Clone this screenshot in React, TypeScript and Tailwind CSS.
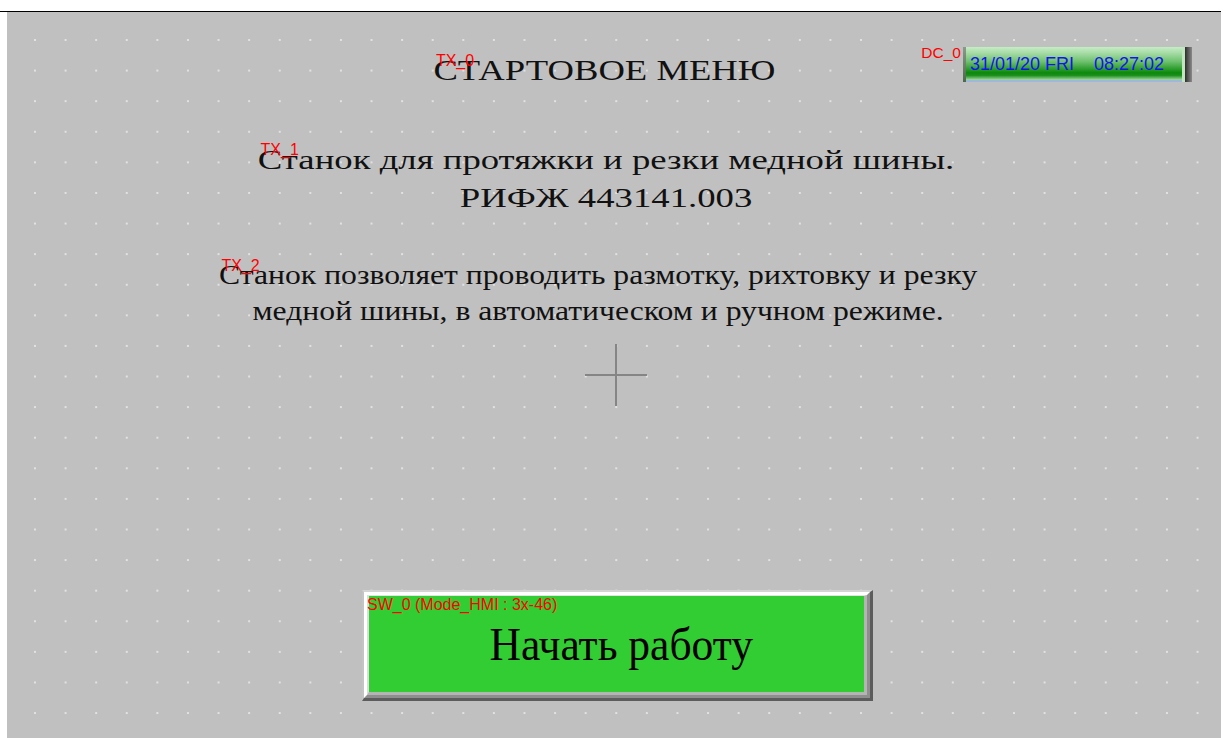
const serif = "font-['Liberation_Serif','Times_New_Roman',serif]";
const sans = "font-['Liberation_Sans',Arial,sans-serif]";

// red object id shown at the top-left corner of an HMI text object;
// `unscale` cancels the horizontal stretch of the parent text block
function Tag({ text, unscale }: { text: string; unscale: string }) {
  return (
    <span className={`${sans} ${unscale} pointer-events-none absolute left-[2px] top-[1px] origin-left whitespace-nowrap text-[16px] leading-none text-[#ff0000]`}>
      {text}
    </span>
  );
}

function Clock() {
  return (
    <div className="absolute right-[29px] top-[35px] flex items-start">
      <span className={`${sans} mr-[2px] mt-[-2px] text-[15.5px] leading-none text-[#ff0000]`}>DC_0</span>
      <div className="flex h-[35px] items-stretch">
        <div className="w-[3px] bg-[linear-gradient(to_bottom,#8a9a8a,#4a6a4a)]" />
        <div className="flex w-[216px] items-center border-b-[2px] border-b-[#9fb8d8] bg-[linear-gradient(to_bottom,#c6ecc6_0%,#a6dca6_18%,#6cc06c_45%,#3aa43a_62%,#0c8a0c_78%,#1a8e1a_86%,#a8daa8_100%)] pl-[4px]">
          <span className={`${sans} whitespace-pre text-[18px] leading-none text-[#1414f0]`}>31/01/20 FRI    08:27:02</span>
        </div>
        <div className="w-[3px] bg-[#bfe6bf]" />
        <div className="w-[7px] bg-[linear-gradient(to_right,#2e2e2e,#8a8a8a)]" />
      </div>
    </div>
  );
}

function Cross() {
  return (
    <svg width="64" height="64" viewBox="0 0 64 64" className="block">
      <line x1="1" y1="31" x2="63" y2="31" stroke="#858585" strokeWidth="2" />
      <line x1="32" y1="0" x2="32" y2="62" stroke="#858585" strokeWidth="2" />
    </svg>
  );
}

function StartButton() {
  return (
    <div className="relative ml-[7px] mt-[182px] w-[511px] border-b-[3px] border-l-[2px] border-r-[3px] border-t-[2px] border-b-[#5c5c5c] border-l-[#c4c4c4] border-r-[#5c5c5c] border-t-[#d4d4d4]">
      <div className="border-b-[3px] border-l-[3px] border-r-[3px] border-t-[3px] border-b-[#8e8e8e] border-l-white border-r-[#8e8e8e] border-t-white">
        <div className="border-b-[3px] border-l-[2px] border-r-[3px] border-t-[1px] border-b-[#b4b4b4] border-l-[#dcdcdc] border-r-[#b4b4b4] border-t-[#e4e4e4]">
          <div className="flex h-[96px] items-center justify-center bg-[#32cd32]">
            <span className={`${serif} ml-[9px] inline-block scale-x-[0.926] text-[47px] leading-none text-black`}>Начать работу</span>
          </div>
        </div>
      </div>
      <span className={`${sans} absolute left-[3px] top-[5px] whitespace-nowrap text-[16px] leading-none text-[#ff0000]`}>
        SW_0 (Mode_HMI : 3x-46)
      </span>
    </div>
  );
}

export default function App() {
  return (
    <div className="h-[738px] w-[1223px] overflow-hidden bg-white pt-[11px]">
      <div className="h-[1px] w-[1221px] bg-black" />
      <main className="relative ml-[7px] flex h-[726px] w-[1214px] flex-col items-center bg-[#c0c0c0] bg-[radial-gradient(circle_at_1px_1px,#e2e2e2_0.8px,transparent_1.2px)] bg-[length:30.6px_30.6px] bg-[position:27px_27px]">
        <div className="mr-[19px] mt-[40px]">
          <div className={`${serif} relative scale-x-[1.263] text-[29px] leading-[36px] text-[#111]`}>
            СТАРТОВОЕ МЕНЮ
            <Tag text="TX_0" unscale="scale-x-[0.792]" />
          </div>
        </div>

        <div className="mr-[16px] mt-[53px]">
          <div className={`${serif} relative scale-x-[1.36] text-center text-[27px] leading-[38px] text-[#111]`}>
            Станок для протяжки и резки медной шины.
            <br />
            РИФЖ 443141.003
            <Tag text="TX_1" unscale="scale-x-[0.735]" />
          </div>
        </div>

        <div className="mr-[31px] mt-[40px]">
          <div className={`${serif} relative scale-x-[1.173] text-center text-[27px] leading-[36px] text-[#111]`}>
            Станок позволяет проводить размотку, рихтовку и резку
            <br />
            медной шины, в автоматическом и ручном режиме.
            <Tag text="TX_2" unscale="scale-x-[0.853]" />
          </div>
        </div>

        <div className="ml-[4px] mt-[15px]">
          <Cross />
        </div>

        <StartButton />

        <Clock />
      </main>
    </div>
  );
}
